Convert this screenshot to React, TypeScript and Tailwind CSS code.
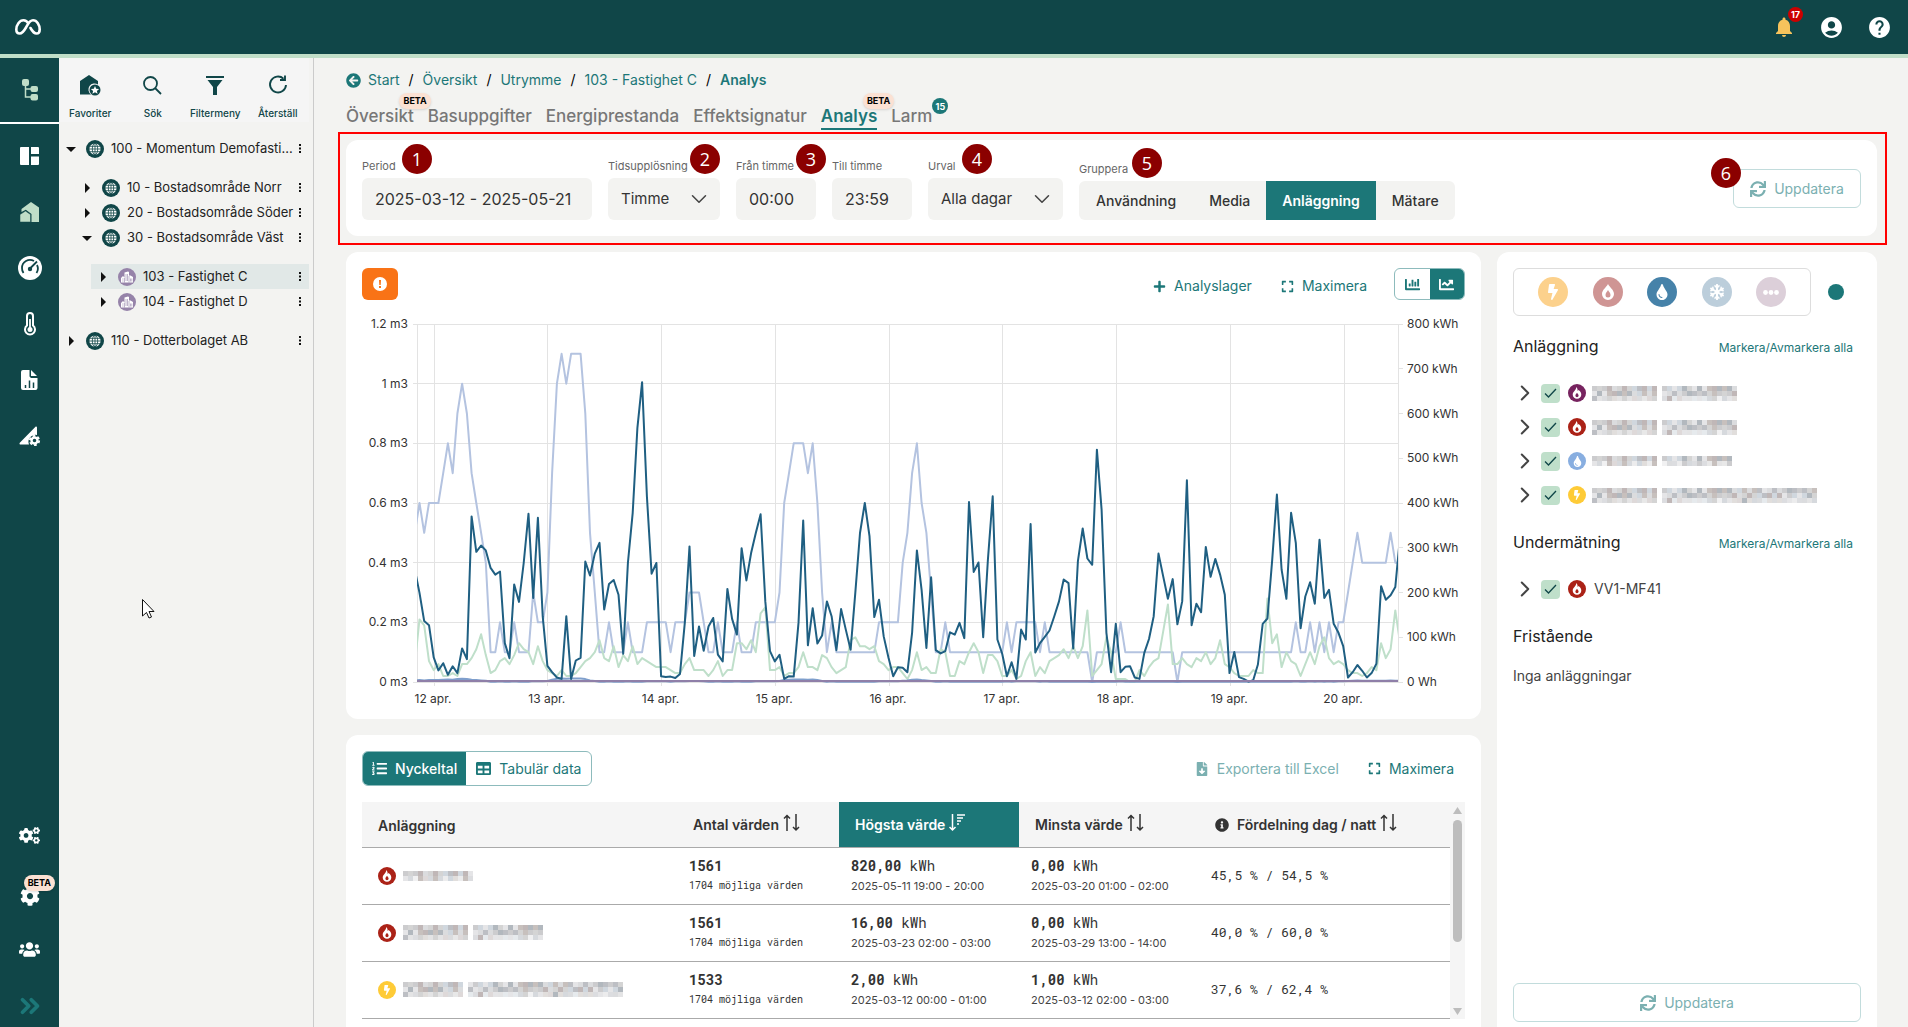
import React from 'react';
import { FaArrowCircleLeft, FaBolt, FaChartBar, FaChartLine, FaCog, FaCogs, FaExpand, FaFileDownload, FaInfoCircle, FaListOl, FaPlus, FaSnowflake, FaSync, FaTable, FaTint, FaUsers } from 'react-icons/fa';
import { MdAccountCircle, MdHelp, MdNotifications } from 'react-icons/md';
import { ChevronsRight, ChevronDown, ChevronRight } from 'lucide-react';

// hourly values, starting 20:00 on 11 April
const ENERGY = [
  251, 199, 136, 127, 55, 26, 42, 16, 35, 20, 75, 51, 370, 291, 305, 294, 255, 240, 247, 87, 53, 218, 179, 266, 376,
  188, 367, 147, 36, 22, 10, 7, 147, 7, 48, 54, 269, 238, 287, 311, 162, 219, 228, 195, 63, 266, 378, 568, 670, 415,
  242, 266, 13, 11, 12, 9, 18, 132, 303, 58, 124, 70, 124, 143, 61, 46, 208, 141, 106, 299, 227, 288, 333, 375, 180,
  69, 46, 61, 7, 13, 12, 132, 361, 82, 165, 86, 104, 180, 147, 71, 163, 117, 72, 199, 333, 400, 326, 145, 184, 102,
  54, 13, 33, 32, 22, 110, 294, 206, 76, 234, 71, 64, 69, 111, 106, 132, 98, 402, 246, 267, 100, 273, 415, 95, 63,
  13, 44, 7, 117, 95, 353, 66, 87, 101, 115, 147, 180, 229, 221, 75, 270, 343, 276, 262, 519, 385, 110, 22, 130, 22,
  34, 35, 10, 7, 65, 96, 147, 287, 236, 186, 230, 129, 180, 451, 127, 175, 156, 302, 235, 275, 240, 195, 20, 67, 11,
  7, 1, 4, 39, 130, 142, 273, 419, 251, 186, 378, 311, 120, 191, 223, 175, 318, 188, 206, 130, 110, 80, 10, 22, 38,
  25, 10, 20, 41, 214, 184, 194, 212, 326,
];

// tenths of a cubic metre
const WATER = [
  5, 6, 5, 6, 6, 6, 7, 8, 7, 9, 10, 9, 7, 6, 5, 4, 1, 1, 2, 1, 1, 2, 1, 1, 1, 3, 2, 2, 3, 7, 10, 11, 10, 11, 11, 11,
  9, 5, 3, 1, 1, 2, 1, 1, 1, 2, 1, 1, 1, 2, 2, 2, 2, 2, 1, 2, 2, 2, 3, 3, 3, 2, 1, 1, 2, 1, 1, 1, 2, 1, 1, 1, 2, 2,
  2, 2, 2, 3, 6, 7, 8, 8, 8, 7, 8, 6, 3, 1, 2, 1, 1, 1, 1, 1, 1, 1, 1, 1, 2, 2, 2, 2, 2, 4, 5, 7, 8, 6, 5, 3, 1, 1,
  2, 1, 1, 1, 1, 1, 1, 1, 1, 1, 1, 1, 1, 2, 1, 2, 2, 2, 2, 2, 1, 2, 1, 1, 1, 1, 1, 1, 1, 1, 1, 0, 1, 1, 1, 1, 1, 2,
  1, 1, 1, 1, 1, 1, 1, 1, 1, 1, 1, 0, 1, 1, 1, 1, 1, 1, 1, 1, 1, 1, 1, 1, 1, 1, 1, 1, 1, 1, 1, 1, 1, 1, 1, 1, 2, 1,
  1, 2, 1, 2, 1, 2, 1, 2, 2, 3, 4, 5, 4, 4, 4, 4, 4, 4, 5, 4, 4,
];

// hundredths of a cubic metre
const HOT_WATER = [
  6, 21, 19, 7, 4, 6, 2, 2, 3, 2, 6, 6, 8, 11, 16, 9, 3, 4, 7, 8, 6, 9, 13, 11, 10, 6, 12, 7, 4, 3, 2, 4, 2, 2, 3, 5,
  7, 8, 10, 14, 8, 7, 12, 5, 9, 7, 12, 6, 8, 7, 6, 5, 5, 5, 4, 3, 3, 6, 8, 4, 4, 4, 2, 4, 7, 2, 4, 4, 13, 13, 11, 14,
  10, 23, 25, 4, 4, 5, 2, 3, 3, 5, 10, 5, 5, 4, 9, 8, 5, 3, 4, 5, 14, 15, 12, 12, 11, 12, 7, 6, 4, 5, 5, 3, 1, 4, 10,
  4, 5, 3, 3, 11, 10, 2, 2, 7, 6, 10, 13, 10, 3, 9, 9, 7, 2, 2, 4, 1, 2, 7, 10, 2, 5, 3, 7, 8, 9, 11, 8, 12, 8, 12,
  24, 2, 4, 6, 15, 10, 1, 1, 1, 0, 0, 4, 2, 5, 7, 8, 17, 26, 6, 6, 8, 6, 5, 8, 7, 10, 6, 8, 14, 6, 5, 3, 2, 2, 2, 4,
  3, 3, 28, 13, 16, 5, 10, 7, 6, 2, 6, 10, 6, 12, 15, 8, 6, 7, 6, 4, 3, 3, 2, 3, 5, 4, 13, 8, 11, 24, 13,
];

const PLOT = { left: 55, right: 1036, top: 12, bottom: 370 };
const HOUR = 4.737;

const toPoints = (values: number[], max: number) =>
  values
    .map((v, i) => `${(57.5 + (i - 1) * HOUR).toFixed(1)},${(PLOT.bottom - (v / max) * (PLOT.bottom - PLOT.top)).toFixed(1)}`)
    .join(' ');

const LEFT_TICKS = ['1.2 m3', '1 m3', '0.8 m3', '0.6 m3', '0.4 m3', '0.2 m3', '0 m3'];
const RIGHT_TICKS = ['800 kWh', '700 kWh', '600 kWh', '500 kWh', '400 kWh', '300 kWh', '200 kWh', '100 kWh', '0 Wh'];
const DAYS = ['12 apr.', '13 apr.', '14 apr.', '15 apr.', '16 apr.', '17 apr.', '18 apr.', '19 apr.', '20 apr.'];

const Chart: React.FC = () => {
  const height = PLOT.bottom - PLOT.top;
  return (
    <svg viewBox="0 0 1103 400" className="block w-full h-auto text-[12px]" fill="#333" role="img" aria-label="Förbrukning per timme">
      <clipPath id="plot">
        <rect x={PLOT.left} y={PLOT.top - 4} width={PLOT.right - PLOT.left} height={height + 8} />
      </clipPath>
      <g stroke="#e3e3e3" shapeRendering="crispEdges">
        {LEFT_TICKS.map((t, i) => (
          <line key={t} x1={PLOT.left - 4} x2={PLOT.right} y1={PLOT.top + (i * height) / 6} y2={PLOT.top + (i * height) / 6} />
        ))}
        {RIGHT_TICKS.map((t, i) => (
          <line key={t} x1={PLOT.right} x2={PLOT.right + 5} y1={PLOT.top + (i * height) / 8} y2={PLOT.top + (i * height) / 8} />
        ))}
        {DAYS.map((d, i) => (
          <line key={d} x1={72 + i * 113.75} x2={72 + i * 113.75} y1={PLOT.top} y2={PLOT.bottom + 4} />
        ))}
        <line x1={PLOT.left} x2={PLOT.left} y1={PLOT.top} y2={PLOT.bottom} />
        <line x1={PLOT.right} x2={PLOT.right} y1={PLOT.top} y2={PLOT.bottom} />
      </g>
      {LEFT_TICKS.map((t, i) => (
        <text key={t} x={46} y={PLOT.top + (i * height) / 6 + 4} textAnchor="end">{t}</text>
      ))}
      {RIGHT_TICKS.map((t, i) => (
        <text key={t} x={1045} y={PLOT.top + (i * height) / 8 + 4}>{t}</text>
      ))}
      {DAYS.map((d, i) => (
        <text key={d} x={71 + i * 113.75} y={391} textAnchor="middle">{d}</text>
      ))}
      <g clipPath="url(#plot)" fill="none" strokeWidth={2} strokeLinejoin="round">
        <polyline points={toPoints(WATER, 12)} stroke="#b4c3e0" />
        <polyline points={toPoints(HOT_WATER, 120)} stroke="#bfdfca" />
        <polyline points={toPoints(WATER, 1100)} stroke="#7f9fcc" />
        <polyline points={toPoints(ENERGY, 800)} stroke="#1f5f82" />
        <line x1={PLOT.left} x2={PLOT.right} y1={PLOT.bottom - 1} y2={PLOT.bottom - 1} stroke="#8f7fa8" />
      </g>
    </svg>
  );
};

const SHADES = ['#c9c9cb', '#b9bcc1', '#d9dadc', '#c4bdb9', '#aeb4bb', '#e4e4e6', '#cdd5dc', '#bdb3b3', '#d2d2d2'];

// masked meter name
const Masked: React.FC<{ cols: number; rows?: number; gap: number }> = ({ cols, rows = 3, gap }) => (
  <svg width={cols * 5} height={rows * 5} shapeRendering="crispEdges" aria-hidden="true">
    {Array.from({ length: cols * rows }, (_, n) => {
      const c = n % cols;
      const r = Math.floor(n / cols);
      if (c === gap) return null;
      const shade = SHADES[(c * 7 + r * 5 + ((c * c) % 5)) % SHADES.length];
      return <rect key={n} x={c * 5} y={r * 5} width={5} height={5} fill={shade} opacity={r === rows - 1 && c % 3 !== 0 ? 0.5 : 0.95} />;
    })}
  </svg>
);

const Flame = () => (
  <svg width="10" height="12" viewBox="0 0 10 12" fill="currentColor" fillRule="evenodd">
    <path d="M4.200 0C5.500 1.500 5.800 2.500 5.600 4l1-.9C8.300 4.300 9.300 5.800 9.300 7.500a4.300 4.300 0 0 1-8.600 0C.7 4.500 4.300 3.500 4.200 0zM5 5.800C4.300 6.800 3.400 7.600 3.400 8.600a1.600 1.600 0 0 0 3.200 0C6.600 7.600 5.700 6.800 5 5.800z" />
  </svg>
);

const Globe = () => (
  <span className="grid size-[18px] shrink-0 place-items-center rounded-full bg-[#104648]">
    <svg width="12" height="12" viewBox="0 0 12 12" fill="none" stroke="#104648" strokeWidth=".8">
      <circle cx="6" cy="6" r="5.600" fill="white" stroke="none" />
      <ellipse cx="6" cy="6" rx="2.700" ry="5.600" />
      <path d="M6 .5v11M0 6h12M1 3.300h10M1 8.700h10" />
    </svg>
  </span>
);

const Estate = () => (
  <span className="grid size-[18px] shrink-0 place-items-center rounded-full bg-[#9683a9]">
    <svg width="12" height="12" viewBox="0 0 12 12">
      <path d="M0 11.500V6.500h1V5.500h2v1h.5V1.500L7 .5l1 .5v3.500h1.500L12 6v5.500z" fill="white" />
      <path d="M3.500 7v4.500M8 5v6.500M5 3v7M6.500 3v7M1.200 8h1.400M1.200 10h1.400M9.500 7.500v3M10.800 7.500v3" stroke="#9683a9" strokeWidth=".6" />
    </svg>
  </span>
);

interface NodeProps {
  label: string;
  indent: string;
  open?: boolean;
  estate?: boolean;
  selected?: boolean;
}

const TreeNode: React.FC<NodeProps> = ({ label, indent, open, estate, selected }) => (
  <div className={`${indent} flex h-[25px] items-center pr-1 ${selected ? 'bg-[#e1e8e7]' : ''}`}>
    <button className="grid w-6 shrink-0 place-items-center" aria-label={open ? 'Fäll ihop' : 'Fäll ut'}>
      <svg width="10" height="10" viewBox="0 0 10 10" fill="#111">
        <path d={open ? 'M0 3h10L5 8z' : 'M3 0v10l5-5z'} />
      </svg>
    </button>
    <span className="w-[3px]" />
    {estate ? <Estate /> : <Globe />}
    <a href="#" className="ml-[7px] flex-1 whitespace-nowrap text-[13px] text-[#222]">{label}</a>
    <button className="w-[6px] shrink-0" aria-label="Meny">
      <svg width="3" height="11" viewBox="0 0 3 11" fill="#111"><path d="M0 1h2v2H0zM0 4.500h2v2H0zM0 8h2v2H0z" /></svg>
    </button>
  </div>
);

const Beta: React.FC<{ className?: string }> = ({ className = '' }) => (
  <span className={`absolute rounded-full bg-[#fbe1d3] px-1 text-[9px] font-bold leading-4 text-black shadow ${className}`}>BETA</span>
);

const RailButton: React.FC<{ label: string; short?: boolean; children: React.ReactNode }> = ({ label, short, children }) => (
  <button className={`relative grid w-full place-items-center text-white ${short ? 'h-[42px]' : 'h-14'}`} aria-label={label}>{children}</button>
);

const Rail = () => (
  <nav className="flex w-[59px] shrink-0 flex-col bg-[#104648]">
    <button className="grid h-[66px] place-items-center border-b-2 border-white" aria-label="Träd">
      <svg width="18" height="22" viewBox="0 0 18 22" fill="#c0dec8">
        <rect x="1" width="7" height="7" rx="2" />
        <rect x="9.500" y="7" width="7.500" height="6" rx="2" />
        <rect x="9.500" y="15" width="7.500" height="6.500" rx="2" />
        <path d="M4.500 6v12H10M4.500 10H10" fill="none" stroke="#c0dec8" strokeWidth="1.500" />
      </svg>
    </button>
    <div className="flex flex-col pt-1">
      <RailButton label="Översikt">
        <svg width="20" height="18" viewBox="0 0 20 18" fill="white">
          <path d="M1 0h8v18H1a1 1 0 0 1-1-1V1a1 1 0 0 1 1-1zM11 0h7a1 1 0 0 1 1 1v6h-8zM11 9.500h8V17a1 1 0 0 1-1 1h-7z" />
        </svg>
      </RailButton>
      <RailButton label="Fastigheter">
        <svg width="20" height="20" viewBox="0 0 20 20" fill="#c0dec8">
          <path d="M1.500 7L11 0l8 5.500V20h-7.500v-8L5.800 7.800 1.500 10z" />
          <path d="M0 20v-7.500L5.500 9l5 3.500V20z" stroke="#104648" strokeWidth=".5" />
        </svg>
      </RailButton>
      <RailButton label="Mätare">
        <svg width="24" height="24" viewBox="0 0 24 24" fill="none" stroke="white">
          <circle cx="12" cy="12" r="12" fill="white" stroke="none" />
          <path d="M5.500 17a8 8 0 0 1-1.500-5 8 8 0 0 1 12-7M19 9a8 8 0 0 1-.5 8" stroke="#104648" strokeWidth="1.800" />
          <path d="M12 12.500L19 5.500" stroke="#104648" strokeWidth="1.800" />
          <circle cx="12" cy="13" r="2.200" fill="#104648" stroke="none" />
        </svg>
      </RailButton>
      <RailButton label="Temperatur">
        <svg width="12" height="24" viewBox="0 0 12 24" fill="none" stroke="white">
          <path d="M3 13.500V4a3 3 0 0 1 6 0v9.500a5 5 0 1 1-6 0z" strokeWidth="2" />
          <circle cx="6" cy="17.500" r="2.500" fill="white" stroke="none" />
          <path d="M6 7v10" strokeWidth="1.800" />
        </svg>
      </RailButton>
      <RailButton label="Rapporter">
        <svg width="17" height="20" viewBox="0 0 17 20" fill="white">
          <path d="M2 0h6.500v6.500L10 8h6.500v10a2 2 0 0 1-2 2H2a2 2 0 0 1-2-2V2a2 2 0 0 1 2-2z" />
          <path d="M10 0l6 6h-6z" />
          <path d="M4.500 15v3M8.500 10.500V18M12.500 12.500V18" stroke="#104648" strokeWidth="1.500" />
        </svg>
      </RailButton>
      <RailButton label="Energi">
        <svg width="22" height="20" viewBox="0 0 22 20" fill="white">
          <path d="M1.500 18.500a1 1 0 0 1-.7-1.700L16.500.8c.6-.6 1.500-.2 1.500.7V9a7 7 0 0 0-8 9.500z" />
          <circle cx="15.500" cy="14.500" r="4.700" fill="none" stroke="white" strokeWidth="1.800" strokeDasharray="2.700 2.220" />
          <circle cx="15.500" cy="14.500" r="3" fill="none" stroke="white" strokeWidth="2.400" />
        </svg>
      </RailButton>
    </div>
    <div className="mt-auto flex flex-col gap-[15px]">
      <RailButton label="Inställningar" short><FaCogs size={21} /></RailButton>
      <RailButton label="Konfiguration" short>
        <FaCog size={20} className="mt-2" />
        <Beta className="right-1 top-1" />
      </RailButton>
      <RailButton label="Användare" short><FaUsers size={21} /></RailButton>
      <RailButton label="Expandera" short><ChevronsRight size={30} strokeWidth={3} color="#1c7778" /></RailButton>
    </div>
  </nav>
);

const Tool: React.FC<{ label: string; children: React.ReactNode }> = ({ label, children }) => (
  <button className="flex flex-col items-center gap-2 text-[10px] font-medium leading-4 text-[#104648]">
    <span className="grid h-6 place-items-center">{children}</span>
    {label}
  </button>
);

const Tree = () => (
  <aside className="w-[255px] shrink-0 border-r border-[#cbcbcb]">
    <div className="mr-1 grid h-16 grid-cols-4 bg-[#f5f5f5] pt-[15px]">
      <Tool label="Favoriter">
        <svg width="21" height="21" viewBox="0 0 21 21" fill="#104648">
          <path d="M0 6L9 0l9 6v3.500a6 6 0 0 0-7 10H0z" />
          <circle cx="15" cy="15" r="5.500" />
          <path d="M15 11l1.200 2.700 2.900.3-2.200 1.900.7 2.900-2.600-1.500-2.600 1.500.7-2.900-2.200-1.900 2.900-.3z" fill="white" />
        </svg>
      </Tool>
      <Tool label="Sök">
        <svg width="19" height="19" viewBox="0 0 19 19" fill="none" stroke="#104648" strokeWidth="1.800">
          <circle cx="7.500" cy="7.500" r="6.500" />
          <path d="M12 12l6 6" />
        </svg>
      </Tool>
      <Tool label="Filtermeny">
        <svg width="18" height="19" viewBox="0 0 18 19" fill="#104648"><path d="M0 0h18v2H0zM1.500 4h15L11 11v8H7v-8z" /></svg>
      </Tool>
      <Tool label="Återställ">
        <svg width="20" height="20" viewBox="0 0 20 20" fill="none" stroke="#104648" strokeWidth="1.900">
          <path d="M15.500 3.700A8 8 0 1 0 18 10M17 .5V5h-5" />
        </svg>
      </Tool>
    </div>
    <div className="flex flex-col gap-[14px] pt-[14px]">
      <TreeNode label="100 - Momentum Demofasti..." indent="mr-1" open />
      <div className="mr-1">
        <TreeNode label="10 - Bostadsområde Norr" indent="ml-4" />
        <TreeNode label="20 - Bostadsområde Söder" indent="ml-4" />
        <TreeNode label="30 - Bostadsområde Väst" indent="ml-4" open />
      </div>
      <div className="mr-1">
        <TreeNode label="103 - Fastighet C" indent="ml-8" estate selected />
        <TreeNode label="104 - Fastighet D" indent="ml-8" estate />
      </div>
      <TreeNode label="110 - Dotterbolaget AB" indent="mr-1" />
    </div>
  </aside>
);

const Marker: React.FC<{ n: number; className: string }> = ({ n, className }) => (
  <span className={`absolute z-10 grid size-[30px] place-items-center rounded-full bg-[#8b0000] font-['Open_Sans',sans-serif] text-lg leading-none text-white ${className}`}>{n}</span>
);

const SELECT = 'h-[42px] w-full appearance-none rounded-md bg-[#f3f3f1] px-[13px] text-[15px] text-[#333]';

const Field: React.FC<{ id: string; label: string; width: string; value: string; select?: boolean; marker?: React.ReactNode }> = ({ id, label, width, value, select, marker }) => (
  <div className={`relative flex flex-col gap-1 ${width}`}>
    <label htmlFor={id} className="text-[11px] leading-4 text-[#666]">{label}</label>
    {marker}
    {select ? (
      <div className="relative">
        <select id={id} className={SELECT} defaultValue={value}><option>{value}</option></select>
        <ChevronDown size={26} strokeWidth={1.4} className="pointer-events-none absolute right-2 top-2 text-[#444]" />
      </div>
    ) : (
      <input id={id} className="h-[42px] w-full rounded-md bg-[#f3f3f1] px-[13px] text-base text-[#333]" defaultValue={value} />
    )}
  </div>
);

const UpdateButton: React.FC<{ className: string }> = ({ className }) => (
  <button className={`flex h-[39px] items-center justify-center gap-2 rounded-md border border-[#c2dcdc] text-sm text-[#7bb0b1] ${className}`}>
    <FaSync size={16} />
    Uppdatera
  </button>
);

const Filters = () => (
  <section className="relative mt-[10px] flex gap-4 rounded-xl bg-white pb-4 pl-4 pr-4 pt-[18px]">
    <div className="pointer-events-none absolute -bottom-[9px] -left-2 -right-[10px] -top-2 border-2 border-[#ff0000]" />
    <Field id="period" label="Period" width="w-[230px]" value="2025-03-12 - 2025-05-21" marker={<Marker n={1} className="-top-[14px] left-10" />} />
    <Field id="res" label="Tidsupplösning" width="w-28" value="Timme" select marker={<Marker n={2} className="-top-[14px] left-[82px]" />} />
    <Field id="from" label="Från timme" width="w-20" value="00:00" marker={<Marker n={3} className="-top-[14px] left-[60px]" />} />
    <Field id="to" label="Till timme" width="w-20" value="23:59" />
    <Field id="sel" label="Urval" width="w-[135px]" value="Alla dagar" select marker={<Marker n={4} className="-top-[14px] left-[34px]" />} />
    <div role="group" aria-labelledby="group-label" className="relative flex flex-col justify-end">
      <span id="group-label" className="mb-1 text-[11px] leading-4 text-[#666]">Gruppera</span>
      <Marker n={5} className="-top-[10px] left-[53px]" />
      <div className="flex h-[39px] overflow-hidden rounded-md bg-[#f3f3f1] text-sm font-medium text-[#333]">
        <button className="px-[17px]">Användning</button>
        <button className="px-4">Media</button>
        <button className="bg-[#1c7778] px-4 font-semibold text-white">Anläggning</button>
        <button className="px-4">Mätare</button>
      </div>
    </div>
    <div className="relative ml-auto pt-[11px]">
      <Marker n={6} className="-left-[22px] top-0" />
      <UpdateButton className="w-32" />
    </div>
  </section>
);

const TABS = ['Översikt', 'Basuppgifter', 'Energiprestanda', 'Effektsignatur', 'Analys', 'Larm'];

const Heading = () => (
  <>
    <nav className="flex items-center gap-[9px] text-sm leading-5 text-[#1c7778]" aria-label="Brödsmulor">
      <FaArrowCircleLeft size={15} className="-mr-0.5" />
      <a href="#">Start</a><span className="text-black">/</span>
      <a href="#">Översikt</a><span className="text-black">/</span>
      <a href="#">Utrymme</a><span className="text-black">/</span>
      <a href="#">103 - Fastighet C</a><span className="text-black">/</span>
      <a href="#" className="font-semibold">Analys</a>
    </nav>
    <nav className="mt-[10px] flex gap-[14px] text-[17px] font-medium leading-8 text-[#777]" aria-label="Flikar">
      {TABS.map(tab => (
        <a key={tab} href="#" className={`relative h-[30px] ${tab === 'Analys' ? 'border-b-2 border-[#1c7778] font-semibold text-[#1c7778]' : ''}`}>
          {tab}
          {(tab === 'Översikt' || tab === 'Analys') && <Beta className="-right-[17px] -top-[7px]" />}
          {tab === 'Larm' && <span className="absolute -right-4 -top-[2px] grid size-4 place-items-center rounded-full bg-[#1c7778] text-[9px] font-bold leading-none text-white">15</span>}
        </a>
      ))}
    </nav>
  </>
);

const ChartCard = () => (
  <section className="rounded-xl bg-white px-4 pb-[7px] pt-4">
    <div className="flex h-8 items-center text-sm text-[#1c7778]">
      <button className="grid h-8 w-9 place-items-center rounded-md bg-[#f97316]" aria-label="Varning">
        <svg width="14" height="14" viewBox="0 0 14 14">
          <circle cx="7" cy="7" r="7" fill="white" />
          <path d="M6 3h2l-.3 5H6.300zM6 9h2v2H6z" fill="#f97316" />
        </svg>
      </button>
      <button className="ml-auto flex items-center gap-2 pt-1"><FaPlus size={13} />Analyslager</button>
      <button className="ml-[29px] flex items-center gap-2 pt-1"><FaExpand size={13} />Maximera</button>
      <div className="ml-[27px] flex h-8 w-[71px] overflow-hidden rounded-md border border-[#8dbbbc]">
        <button className="grid flex-1 place-items-center" aria-label="Stapeldiagram"><FaChartBar size={15} /></button>
        <button className="grid flex-1 place-items-center bg-[#1c7778] text-white" aria-label="Linjediagram"><FaChartLine size={15} /></button>
      </div>
    </div>
    <div className="mt-3"><Chart /></div>
  </section>
);

const Sort: React.FC<{ active?: boolean }> = ({ active }) => (
  <svg width="17" height="18" viewBox="0 0 17 18" fill="none" stroke="currentColor" strokeWidth="1.500" className="mb-1.5 ml-1 inline-block align-middle">
    {active ? <path d="M3.500 0v16M.5 13l3 3 3-3M8 1h8M8 4h6M8 7h4M8 10h2" /> : <path d="M4 17V1.500M1 4.500l3-3 3 3M13 0v16M10 13l3 3 3-3" />}
  </svg>
);

const ROWS = [
  { color: 'bg-[#ab2217]', cols: 14, rows: 2, gap: -1, count: '1561', max: '820,00', maxAt: '2025-05-11 19:00 - 20:00', min: '0,00', minAt: '2025-03-20 01:00 - 02:00', split: '45,5 % / 54,5 %' },
  { color: 'bg-[#ab2217]', cols: 28, rows: 3, gap: 13, count: '1561', max: '16,00', maxAt: '2025-03-23 02:00 - 03:00', min: '0,00', minAt: '2025-03-29 13:00 - 14:00', split: '40,0 % / 60,0 %' },
  { color: 'bg-[#fecb37]', cols: 44, rows: 3, gap: 12, count: '1533', max: '2,00', maxAt: '2025-03-12 00:00 - 01:00', min: '1,00', minAt: '2025-03-12 02:00 - 03:00', split: '37,6 % / 62,4 %' },
];

const Dot: React.FC<{ color: string; children: React.ReactNode }> = ({ color, children }) => (
  <span className={`grid size-[18px] shrink-0 place-items-center rounded-full text-white ${color}`}>{children}</span>
);

const MONO = "font-['Roboto_Mono','Liberation_Mono',monospace]";

const TableCard = () => (
  <section className="min-h-0 flex-1 rounded-t-xl bg-white px-4 pt-4">
    <div className="flex h-[35px] items-center text-sm text-[#1c7778]">
      <div className="flex h-[35px] overflow-hidden rounded-md border border-[#8dbbbc]">
        <button className="flex items-center gap-2 bg-[#1c7778] px-[9px] font-medium text-white"><FaListOl size={15} />Nyckeltal</button>
        <button className="flex items-center gap-2 px-[10px]"><FaTable size={15} />Tabulär data</button>
      </div>
      <button className="ml-auto flex items-center gap-2 text-[#7bb0b1]" disabled><FaFileDownload size={14} />Exportera till Excel</button>
      <button className="ml-[29px] mr-[11px] flex items-center gap-2"><FaExpand size={13} />Maximera</button>
    </div>
    <div className="mt-4 flex">
      <table className="w-full table-fixed border-collapse text-left text-[#333]">
        <thead>
          <tr className="h-[45px] border-b border-[#aaa] bg-[#f5f5f5] text-sm">
            <th className="w-[315px] px-4 pt-1 font-semibold">Anläggning</th>
            <th className="w-[162px] whitespace-nowrap px-4 pt-1 font-semibold">Antal värden<Sort /></th>
            <th className="w-[180px] whitespace-nowrap bg-[#1c7778] px-4 pt-1 font-semibold text-white">Högsta värde<Sort active /></th>
            <th className="w-[180px] whitespace-nowrap px-4 pt-1 font-semibold">Minsta värde<Sort /></th>
            <th className="whitespace-nowrap px-4 pt-1 font-semibold"><FaInfoCircle size={14} className="mb-0.5 mr-2 inline" />Fördelning dag / natt<Sort /></th>
          </tr>
        </thead>
        <tbody>
          {ROWS.map((r, i) => (
            <tr key={i} className="h-[57px] border-b border-[#aaa]">
              <td className="px-4">
                <div className="flex items-center gap-[7px]">
                  <Dot color={r.color}>{i === 2 ? <FaBolt size={10} /> : <Flame />}</Dot>
                  <Masked cols={r.cols} rows={r.rows} gap={r.gap} />
                </div>
              </td>
              <td className={`px-3 ${MONO}`}>
                <div className="text-sm font-bold leading-5">{r.count}</div>
                <div className="text-[10px] leading-5">1704 möjliga värden</div>
              </td>
              <td className="px-3">
                <div className={`text-sm leading-5 ${MONO}`}><b>{r.max}</b> kWh</div>
                <div className="text-[11px] leading-5 text-[#444]">{r.maxAt}</div>
              </td>
              <td className="px-3">
                <div className={`text-sm leading-5 ${MONO}`}><b>{r.min}</b> kWh</div>
                <div className="text-[11px] leading-5 text-[#444]">{r.minAt}</div>
              </td>
              <td className={`px-3 text-[13px] ${MONO}`}>{r.split}</td>
            </tr>
          ))}
        </tbody>
      </table>
      <div className="flex w-[15px] shrink-0 flex-col items-center bg-[#f5f5f5] pb-1 pt-[5px]">
        <svg width="9" height="7" viewBox="0 0 9 7" fill="#bdbdbd"><path d="M4.500 0L9 7H0z" /></svg>
        <span className="mt-1.5 h-[122px] w-[9px] rounded-full bg-[#bdbdbd]" />
        <svg width="9" height="7" viewBox="0 0 9 7" fill="#bdbdbd" className="mt-auto"><path d="M0 0h9L4.500 7z" /></svg>
      </div>
    </div>
  </section>
);

const MeterRow: React.FC<{ name: string; color: string; icon: React.ReactNode; children: React.ReactNode }> = ({ name, color, icon, children }) => (
  <div className="flex h-[34px] items-center">
    <button className="-ml-px mr-[3px]" aria-label="Visa"><ChevronRight size={26} strokeWidth={1.8} color="#444" /></button>
    <label className="flex items-center text-sm text-[#444]">
      <span className="relative grid size-[19px] place-items-center">
        <input type="checkbox" defaultChecked aria-label={name} className="size-[19px] appearance-none rounded-sm bg-[#bfdfca]" />
        <svg width="13" height="10" viewBox="0 0 13 10" fill="none" stroke="#104648" strokeWidth="1.300" className="pointer-events-none absolute"><path d="M1 5.500L4.500 9 12 1" /></svg>
      </span>
      <span className="ml-2 mr-[6px]"><Dot color={color}>{icon}</Dot></span>
      {children}
    </label>
  </div>
);

const GroupHead: React.FC<{ title: string; link?: boolean }> = ({ title, link }) => (
  <div className="flex h-6 items-center justify-between pr-2">
    <h2 className="text-base text-[#222]">{title}</h2>
    {link && <button className="pt-1 text-[12px] text-[#1c7778]">Markera/Avmarkera alla</button>}
  </div>
);

const MeterPanel = () => (
  <aside className="flex w-[380px] shrink-0 flex-col rounded-t-xl bg-white p-4 pb-[5px]">
    <div className="flex items-center">
      <div className="flex h-12 w-[298px] items-center justify-between rounded-md border border-[#ddd] px-6 text-white">
        <button className="grid size-[30px] place-items-center rounded-full bg-[#fcd18c]" aria-label="El"><FaBolt size={16} /></button>
        <button className="grid size-[30px] place-items-center rounded-full bg-[#cf9594]" aria-label="Värme">
          <svg width="12" height="16" viewBox="0 0 12 16"><path d="M6 0c1.500 3 6 6 6 10a6 6 0 0 1-12 0C0 6 4.500 3 6 0z" fill="white" /><path d="M6 6c.8 1.500 2.500 3 2.500 5a2.500 2.500 0 0 1-5 0C3.500 9 5.200 7.500 6 6z" fill="#cf9594" /></svg>
        </button>
        <button className="grid size-[30px] place-items-center rounded-full bg-[#4682a9]" aria-label="Vatten"><FaTint size={16} /></button>
        <button className="grid size-[30px] place-items-center rounded-full bg-[#bccedb]" aria-label="Kyla"><FaSnowflake size={16} /></button>
        <button className="grid size-[30px] place-items-center rounded-full bg-[#dccfd9]" aria-label="Övrigt">
          <svg width="16" height="5" viewBox="0 0 16 5" fill="white"><circle cx="2.500" cy="2.500" r="2.400" /><circle cx="8" cy="2.500" r="2.400" /><circle cx="13.500" cy="2.500" r="2.400" /></svg>
        </button>
      </div>
      <span className="ml-[17px] size-4 rounded-full bg-[#1c7778]" />
    </div>
    <div className="mt-[18px]"><GroupHead title="Anläggning" link /></div>
    <div className="mt-[18px]">
      <MeterRow name="Mätare 1" color="bg-[#77235f]" icon={<Flame />}><Masked cols={29} gap={13} /></MeterRow>
      <MeterRow name="Mätare 2" color="bg-[#ab2217]" icon={<Flame />}><Masked cols={29} gap={13} /></MeterRow>
      <MeterRow name="Mätare 3" color="bg-[#88aee0]" icon={<FaTint size={11} />}><Masked cols={28} rows={2} gap={13} /></MeterRow>
      <MeterRow name="Mätare 4" color="bg-[#fecb37]" icon={<FaBolt size={10} />}><Masked cols={45} gap={13} /></MeterRow>
    </div>
    <div className="mt-[18px]"><GroupHead title="Undermätning" link /></div>
    <div className="mt-[18px]">
      <MeterRow name="VV1-MF41" color="bg-[#ab2217]" icon={<Flame />}><span className="ml-0.5">VV1-MF41</span></MeterRow>
    </div>
    <div className="mt-[18px]"><GroupHead title="Fristående" /></div>
    <p className="mt-[18px] text-sm text-[#444]">Inga anläggningar</p>
    <UpdateButton className="mt-auto w-full" />
  </aside>
);

const App: React.FC = () => (
  <div className="flex h-screen flex-col overflow-hidden bg-[#f3f3f1] font-['Inter','Liberation_Sans',sans-serif]">
    <header className="flex h-[58px] shrink-0 items-center border-b-4 border-[#c0dec8] bg-[#104648] pl-[15px] pr-4 text-white">
      <svg width="26" height="16" viewBox="0 0 26 16" fill="none" stroke="white" strokeWidth="2.600" strokeLinecap="round" aria-label="Momentum">
        <path d="M13.500 4.500C12 2 10.500 1.300 8.500 1.300 4.500 1.300 1.300 6 1.300 10.500c0 2.500 1.400 4 3.500 4 2.500 0 4.200-2.500 6.200-6s3.500-7.200 7-7.200c4 0 6.700 4.700 6.700 9.200 0 2.500-1.200 4-3.200 4-2.800 0-4.500-2.800-6-5.500" />
      </svg>
      <div className="ml-auto flex items-center gap-[23px]">
        <button className="relative" aria-label="Aviseringar">
          <MdNotifications size={24} color="#f6c35c" />
          <span className="absolute -right-[7px] -top-2 grid size-[15px] place-items-center rounded-full bg-[#cc0000] text-[9px] font-bold leading-none">17</span>
        </button>
        <button aria-label="Konto"><MdAccountCircle size={25} /></button>
        <button aria-label="Hjälp"><MdHelp size={25} /></button>
      </div>
    </header>
    <div className="flex min-h-0 flex-1">
      <Rail />
      <Tree />
      <main className="flex min-w-0 flex-1 flex-col pl-8 pr-[31px] pt-3">
        <Heading />
        <Filters />
        <div className="mt-4 flex min-h-0 flex-1 gap-4">
          <div className="flex min-w-0 flex-1 flex-col gap-4">
            <ChartCard />
            <TableCard />
          </div>
          <MeterPanel />
        </div>
      </main>
    </div>
    <svg width="13" height="20" viewBox="0 0 13 20" className="pointer-events-none absolute left-[142px] top-[599px]" aria-hidden="true">
      <path d="M.5.500v16.500l4-3.500 2.500 5.500 2.500-1-2.500-5.500h5z" fill="white" stroke="#111" />
    </svg>
  </div>
);

export default App;
